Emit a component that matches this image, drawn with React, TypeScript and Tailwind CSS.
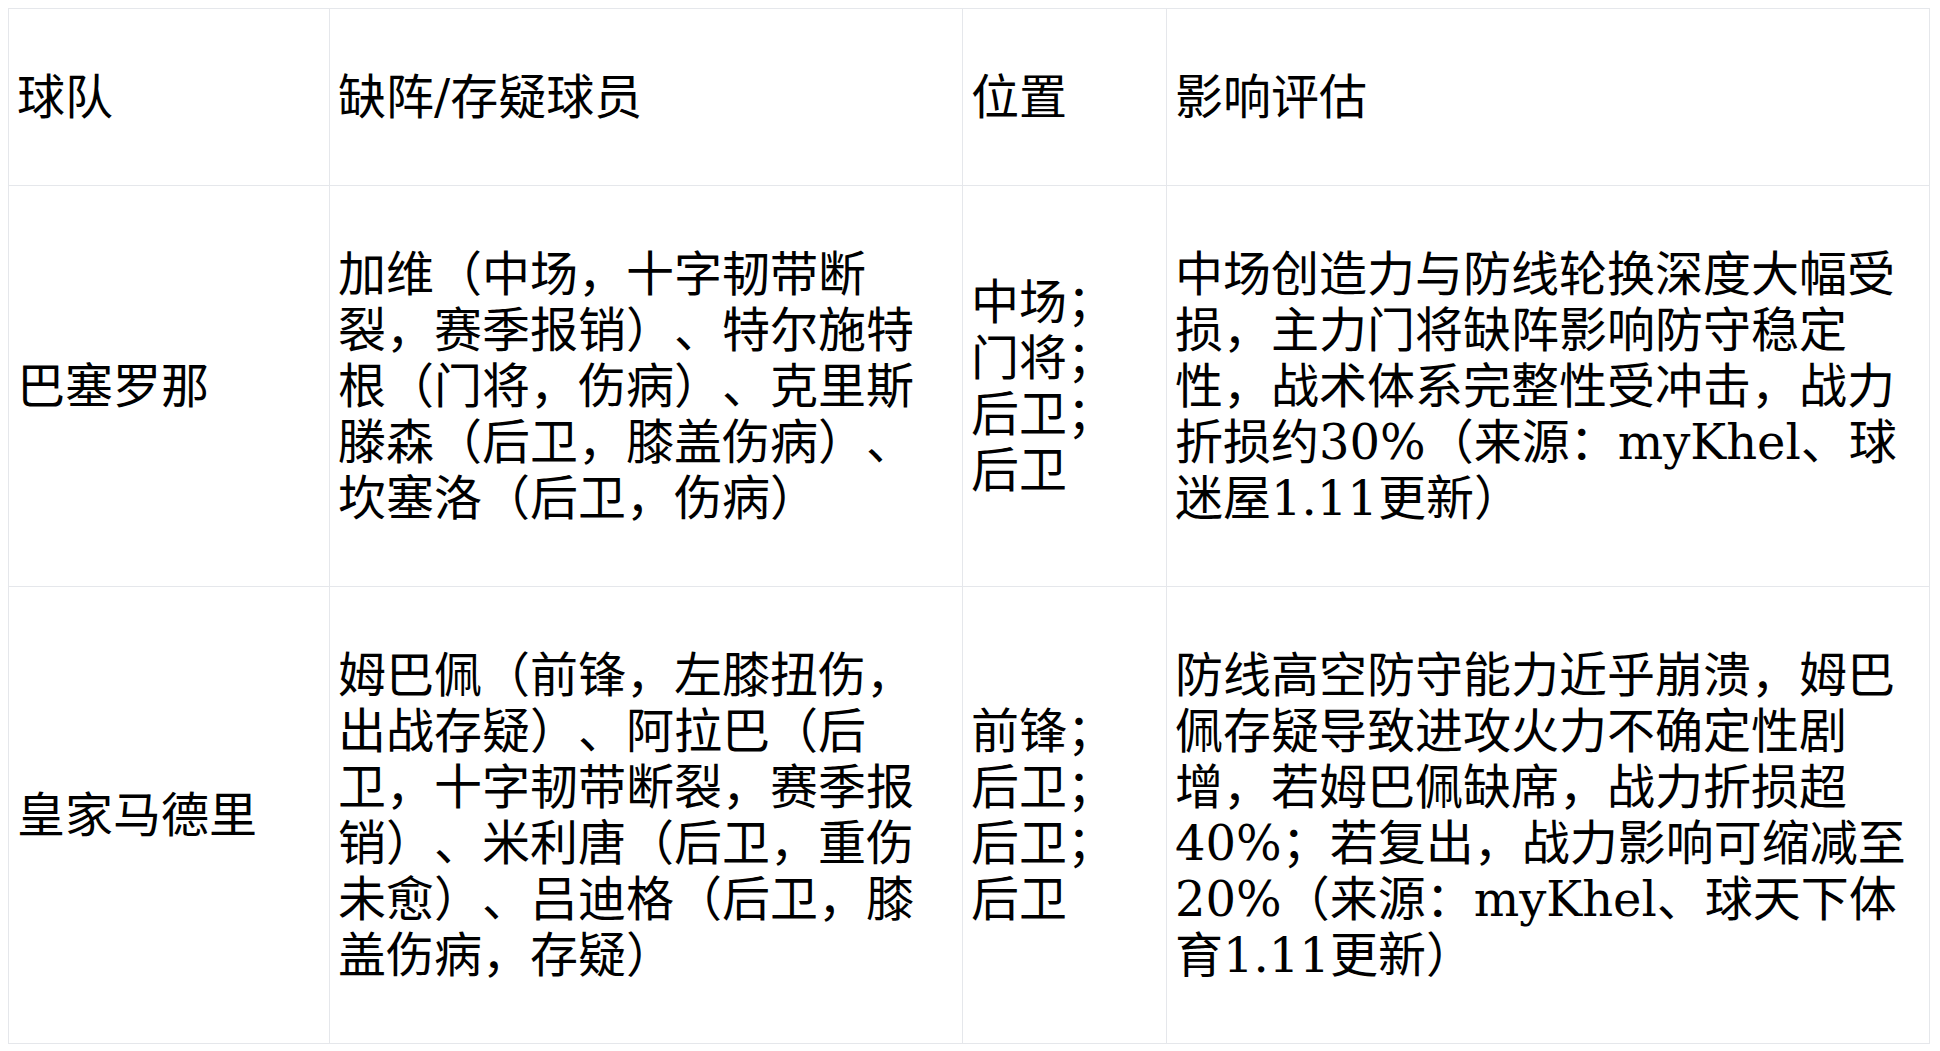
const rows = [
  {
    team: '巴塞罗那',
    players:
      '加维（中场，十字韧带断裂，赛季报销）、特尔施特根（门将，伤病）、克里斯滕森（后卫，膝盖伤病）、坎塞洛（后卫，伤病）',
    positions: '中场；门将；后卫；后卫',
    impact:
      '中场创造力与防线轮换深度大幅受损，主力门将缺阵影响防守稳定性，战术体系完整性受冲击，战力折损约30%（来源：myKhel、球迷屋1.11更新）',
    height: 'h-[401px]',
  },
  {
    team: '皇家马德里',
    players:
      '姆巴佩（前锋，左膝扭伤，出战存疑）、阿拉巴（后卫，十字韧带断裂，赛季报销）、米利唐（后卫，重伤未愈）、吕迪格（后卫，膝盖伤病，存疑）',
    positions: '前锋；后卫；后卫；后卫',
    impact:
      '防线高空防守能力近乎崩溃，姆巴佩存疑导致进攻火力不确定性剧增，若姆巴佩缺席，战力折损超40%；若复出，战力影响可缩减至20%（来源：myKhel、球天下体育1.11更新）',
    height: 'h-[457px]',
  },
];

const cell = 'border border-[#e5e7eb] px-2 align-middle';

export default function App() {
  return (
    <div className="min-h-screen bg-white p-2 text-black font-['DejaVu_Serif','Noto_Sans_CJK_SC',serif] text-[48px] leading-[56px] [text-spacing-trim:space-all]">
      <table className="w-[1921px] table-fixed border-collapse">
        <colgroup>
          <col className="w-[321px]" />
          <col className="w-[633px]" />
          <col className="w-[204px]" />
          <col className="w-[763px]" />
        </colgroup>
        <thead>
          <tr className="h-[177px]">
            <th className={`${cell} text-left font-normal`}>球队</th>
            <th className={`${cell} text-left font-normal`}>缺阵/存疑球员</th>
            <th className={`${cell} text-left font-normal`}>位置</th>
            <th className={`${cell} text-left font-normal`}>影响评估</th>
          </tr>
        </thead>
        <tbody>
          {rows.map((r) => (
            <tr key={r.team} className={r.height}>
              <td className={cell}>{r.team}</td>
              <td className={cell}>{r.players}</td>
              <td className={cell}>{r.positions}</td>
              <td className={cell}>{r.impact}</td>
            </tr>
          ))}
        </tbody>
      </table>
    </div>
  );
}
